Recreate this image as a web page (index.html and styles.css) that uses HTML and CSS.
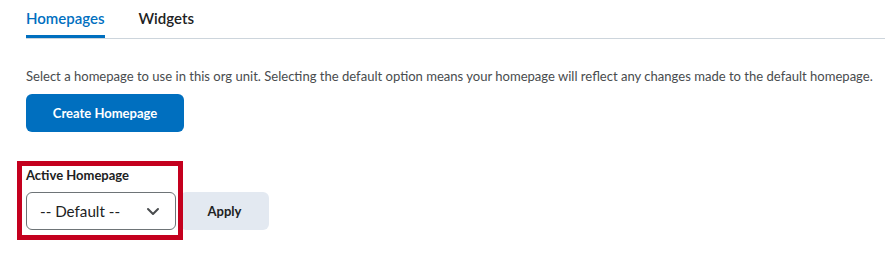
FILE: index.html
```html
<!DOCTYPE html>
<html>
<head>
<meta charset="utf-8">
<link rel="stylesheet" href="styles.css">
</head>
<body>
<div class="page">
  <div class="tabs">
    <div class="tab active">Homepages</div>
    <div class="tab">Widgets</div>
  </div>
  <p class="desc">Select a homepage to use in this org unit. Selecting the default option means your homepage will reflect any changes made to the default homepage.</p>
  <button class="btn-primary">Create Homepage</button>
  <div class="field">
    <div class="highlight"></div>
    <label class="label">Active Homepage</label>
    <div class="row">
      <div class="select">
        <span>-- Default --</span>
        <svg class="chev" width="14" height="9" viewBox="0 0 14 9"><path d="M2 2 L7 7 L12 2" fill="none" stroke="#494c4e" stroke-width="2" stroke-linecap="round" stroke-linejoin="round"/></svg>
      </div>
      <button class="btn-secondary">Apply</button>
    </div>
  </div>
</div>
</body>
</html>
```

FILE: styles.css
```css
* { box-sizing: border-box; }
html, body { margin: 0; padding: 0; background: #fff; }
body { font-family: Lato, "Noto Sans", sans-serif; color: #494c4e; min-height: 269px; }
.page { padding: 0 0 39px 26px; }
.tabs {
  display: flex;
  gap: 34px;
  border-bottom: 1px solid #cdd5dc;
  height: 39px;
}
.tab {
  font-size: 15px;
  font-weight: 600;
  color: #202122;
  padding-top: 8px;
  line-height: 20px;
  height: 38px;
}
.tab.active {
  color: #006fbf;
  border-bottom: 3px solid #006fbf;
  margin-bottom: -1px;
  height: 38px;
}
.desc {
  margin: 27px 0 0 0;
  font-size: 13.05px;
  line-height: 20px;
  color: #494c4e;
  white-space: nowrap;
}
.btn-primary {
  margin-top: 8px;
  display: block;
  width: 158px;
  height: 38px;
  background: #006fbf;
  color: #fff;
  border: none;
  border-radius: 6px;
  font-family: Lato, sans-serif;
  font-weight: 700;
  font-size: 13px;
}
.field { position: relative; margin-top: 33px; width: 243px; }
.label {
  display: block;
  font-size: 13px;
  font-weight: 700;
  color: #202122;
  line-height: 20px;
  margin-bottom: 7px;
}
.row { display: flex; gap: 4px; }
.select {
  width: 150px;
  height: 38px;
  border: 1px solid #6e7477;
  border-radius: 6px;
  display: flex;
  align-items: center;
  justify-content: space-between;
  padding: 0 15px 0 13px;
  font-size: 15.2px;
  color: #202122;
  background: #fff;
}
.chev { margin-top: 1px; }
.btn-secondary {
  width: 89px;
  height: 38px;
  background: #e3e9f1;
  border: none;
  border-radius: 6px;
  font-family: Lato, sans-serif;
  font-weight: 700;
  font-size: 13px;
  color: #202122;
}
.highlight {
  position: absolute;
  left: -9px;
  top: -4px;
  width: 166px;
  height: 79px;
  border: 5px solid #c4001e;
  z-index: 2;
  pointer-events: none;
}
```
